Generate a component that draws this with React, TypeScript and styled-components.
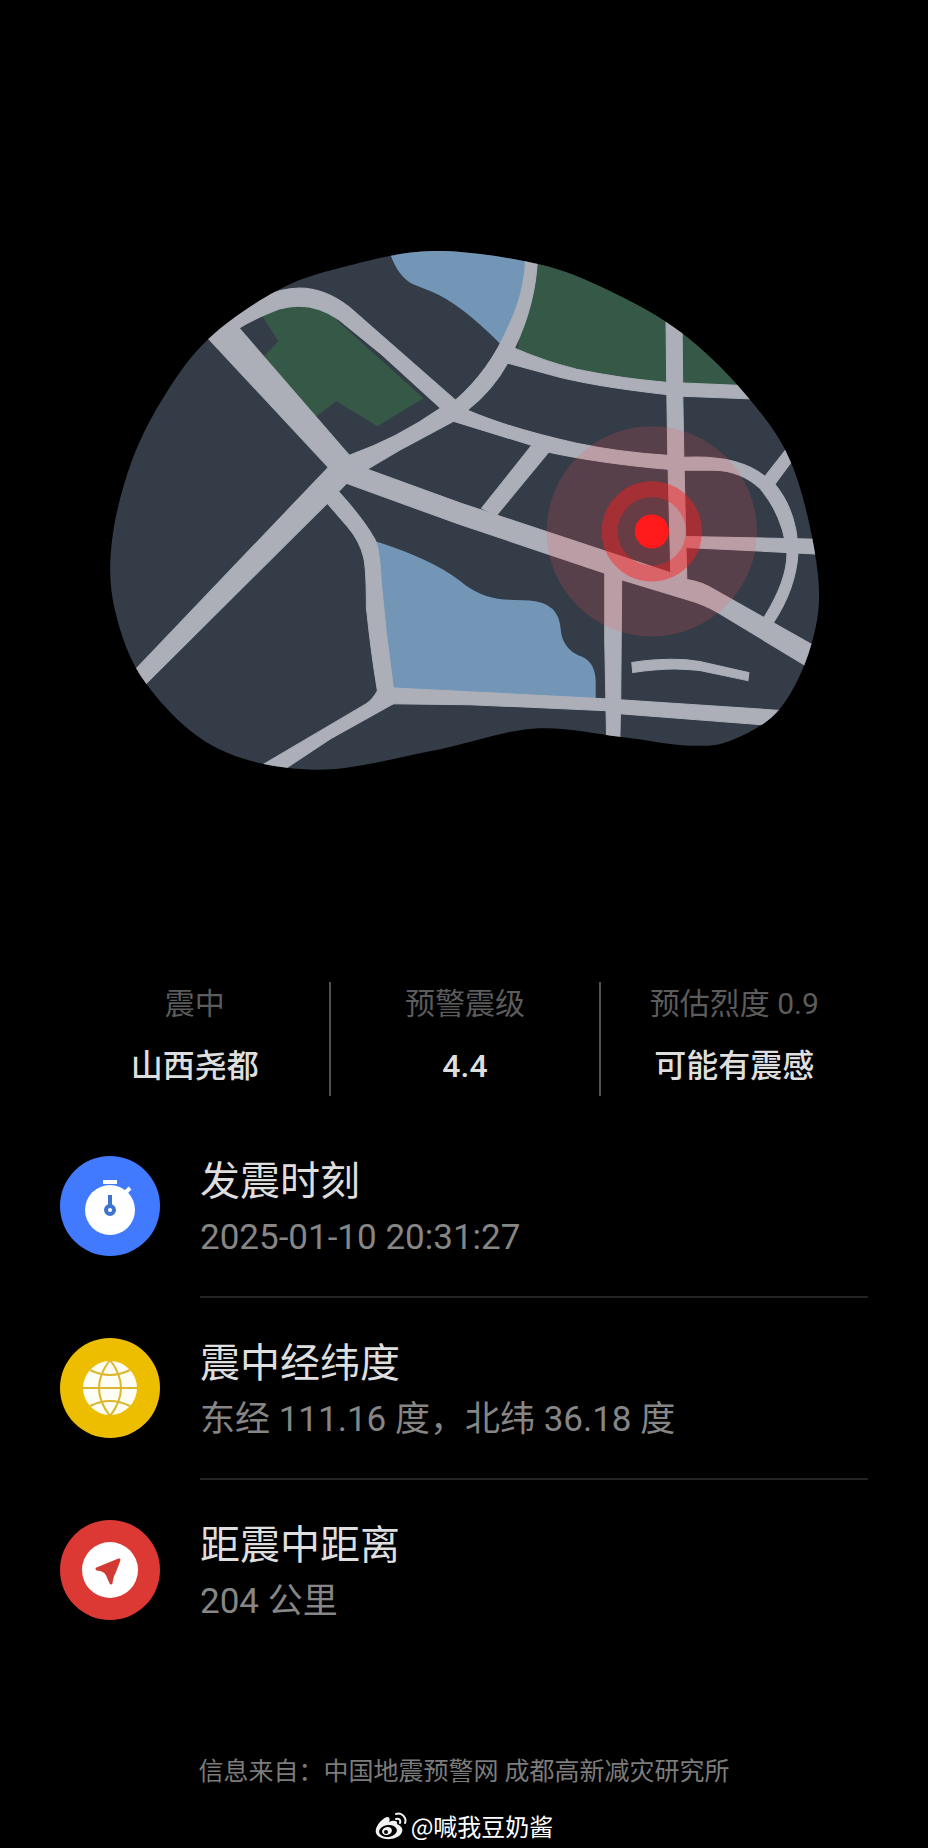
import React from 'react';
import styled, { createGlobalStyle } from 'styled-components';

const Global = createGlobalStyle`
  * { box-sizing: border-box; }
  body {
    margin: 0;
    background: #000;
    font-family: Roboto, "Noto Sans CJK SC", sans-serif;
  }
  h2, p, dl, dt, dd, ul { margin: 0; padding: 0; font-weight: 400; }
`;

const Page = styled.main`
  display: flex;
  flex-direction: column;
  padding: 250px 60px 0;
`;

const MapArt = styled.svg`
  display: block;
  width: 88%;
  margin: 0 auto;
`;

const Summary = styled.dl`
  display: grid;
  grid-template-columns: repeat(3, 1fr);
  margin-top: 211px;
`;

const Stat = styled.div`
  display: flex;
  flex-direction: column;
  align-items: center;
  gap: 16px;
  height: 114px;
  white-space: nowrap;
  & + & { border-left: 2px solid #505050; }
`;

const StatLabel = styled.dt`
  font-size: 30px;
  line-height: 44px;
  color: #5c5c5c;
`;

const StatValue = styled.dd`
  font-size: 32px;
  line-height: 48px;
  font-weight: 500;
  color: #dedede;
`;

const Details = styled.ul`
  display: flex;
  flex-direction: column;
  gap: 40px;
  margin-top: 60px;
  list-style: none;
`;

const Detail = styled.li`
  display: flex;
  gap: 40px;
`;

const Badge = styled.svg`
  flex: none;
  width: 100px;
  height: 100px;
`;

const DetailBody = styled.div<{ $last?: boolean }>`
  flex: 1;
  height: 142px;
  border-bottom: ${(p) => (p.$last ? 'none' : '2px solid #242424')};
`;

const DetailTitle = styled.h2`
  font-size: 40px;
  line-height: 52px;
  color: #dedede;
`;

const DetailText = styled.p`
  font-size: 35px;
  line-height: 60px;
  color: #868686;
`;

const Source = styled.p`
  margin-top: 92px;
  font-size: 25px;
  line-height: 36px;
  text-align: center;
  color: #7c7c7c;
`;

const Credit = styled.p`
  display: flex;
  align-items: center;
  justify-content: center;
  gap: 4px;
  margin-top: 18px;
  font-family: "Noto Sans CJK SC", sans-serif;
  font-size: 24px;
  line-height: 36px;
  color: #fff;
`;

type Pt = [number, number];

const blob: Pt[] = [
  [210, 338], [277, 291], [340, 268], [433, 251], [538, 264], [610, 291], [682, 333], [748, 397],
  [793, 467], [818, 575], [811, 645], [780, 708], [733, 739], [690, 745], [620, 736], [533, 728],
  [433, 750], [317, 769], [217, 747], [147, 683], [116, 610], [113, 540], [133, 460], [167, 393],
];

/* Closed smooth curve through every point. */
function smoothLoop(pts: Pt[]) {
  const n = pts.length;
  const at = (i: number) => pts[(i + n) % n];
  let d = `M${pts[0][0]} ${pts[0][1]}`;
  for (let i = 0; i < n; i++) {
    const [a, b, c, e] = [at(i - 1), at(i), at(i + 1), at(i + 2)];
    d += `C${b[0] + (c[0] - a[0]) / 6} ${b[1] + (c[1] - a[1]) / 6} ${c[0] - (e[0] - b[0]) / 6} ${c[1] - (e[1] - b[1]) / 6} ${c[0]} ${c[1]}`;
  }
  return d + 'Z';
}

const roads = [
  // north-west avenue and its loop
  'M180 307L329 467L338 476L350 455L240 328Q254 319 280 309Q312 300 340 320L383 355L441 408L456 400L350 307Q308 274 262 298L240 290L190 300Z',
  // diagonal to the south-west
  'M329 467L118 688L130 700L328 503L347 483L368 469L350 455Z',
  // junction to the central crossing
  'M350 455Q398 438 441 408L456 400L468 410L454 421L400 450L368 469L345 476Z',
  // main avenue, south-east
  'M345 460L368 469L462 503L670 572L687 579Q702 581 716 590L764 617L830 654L830 680L718 612Q704 604 690 600L621 579L606 573L460 524L347 483L329 467Z',
  // street to the lake
  'M328 503L348 526Q360 540 364 556Q367 567 367 607Q372 655 378 690Q374 698 367 703L255 769L280 772L333 737L394 703L394 688L387 633L382 583Q380 545 375 538Q366 522 347 500L339 491L347 483L330 480L320 495Z',
  // southern street
  'M390 687L470 691L605 698L620 699L800 711L800 726L762 724L620 713L607 710L470 704L390 703Z',
  'M605 570L622 577L621 699L620 745L607 745L605 640Z',
  // northern curve
  'M526 250Q527 290 508 328Q490 370 456 400L454 412L468 410Q494 389 508 363L515 348Q538 300 538 250Z',
  'M515 348Q545 361 577 369Q620 378 666 382L760 386L760 399L683 396Q605 388 560 377L508 363L508 350Z',
  'M666 300L682 300L683 397L684 457L687 579L671 574L668 457L667 393Z',
  // ring road
  'M468 410Q510 428 577 443Q620 452 667 455L684 457Q738 454 765 476L775 484Q798 512 798 553Q796 588 773 623L764 617Q787 580 787 553Q783 515 760 488Q740 470 713 470L683 470L668 469Q600 463 549 452L532 445L454 421Z',
  'M765 476L790 444L797 454L775 484Z',
  'M686 536L825 539L825 554L686 547Z',
  'M532 445L549 452L497 515L482 508Z',
  'M632 662Q672 656 700 661L749 672L748 680L700 670Q670 666 633 672Z',
];

function EpicenterMap() {
  return (
    <MapArt viewBox="109 250 710 520" role="img" aria-label="震中地图">
      <clipPath id="blob"><path d={smoothLoop(blob)} /></clipPath>
      <g clipPath="url(#blob)">
        <rect x="109" y="250" width="712" height="522" fill="#333c47" />
        <path fill="#365846" d="M263 316L279 341L265 356L316 417L337 401L378 426L424 398L334 317Q305 295 263 316Z" />
        <path fill="#365846" d="M532 250L518 350Q580 376 666 386L760 388L700 300Z" />
        <path fill="#7396b7" d="M388 245Q396 275 413 284L433 292Q460 303 501 344L530 280L530 240Z" />
        <path fill="#7396b7" d="M377 541Q433 559 460 580Q480 597 504 599L530 600Q559 602 561 628C562 645 573 653 582 656Q596 662 596 682L596 699L390 692Z" />
        <g fill="#acafb8" stroke="#acafb8" strokeWidth="1">{roads.map((d) => <path key={d} d={d} />)}</g>
        <circle cx="652" cy="531" r="105" fill="#ff5252" fillOpacity="0.18" />
        <circle cx="652" cy="531" r="34" fill="#ff1e1e" fillOpacity="0.1" />
        <circle cx="652" cy="531" r="42" fill="none" stroke="#ff1e1e" strokeWidth="16" strokeOpacity="0.46" />
        <circle cx="652" cy="531" r="17" fill="#ff1a1c" />
      </g>
    </MapArt>
  );
}

function ClockBadge() {
  return (
    <Badge viewBox="0 0 100 100" aria-hidden="true">
      <circle cx="50" cy="50" r="50" fill="#417aff" />
      <circle cx="50" cy="54" r="25" fill="#fff" />
      <rect x="43" y="24" width="14" height="4" fill="#fff" />
      <path d="M64 38L70 32" stroke="#fff" strokeWidth="4" />
      <path d="M50 39V50" stroke="#3f73d0" strokeWidth="4" />
      <circle cx="50" cy="54" r="4" fill="none" stroke="#3f73d0" strokeWidth="4" />
    </Badge>
  );
}

function GlobeBadge() {
  return (
    <Badge viewBox="0 0 100 100" aria-hidden="true">
      <circle cx="50" cy="50" r="50" fill="#edbe00" />
      <circle cx="50" cy="50" r="27" fill="#fffef4" />
      <g fill="none" stroke="#dcb62c" strokeWidth="2">
        <path d="M22 50H78M50 22Q28 50 50 78M50 22Q72 50 50 78M30 32Q50 42 70 32M30 68Q50 58 70 68" />
      </g>
    </Badge>
  );
}

function ArrowBadge() {
  return (
    <Badge viewBox="0 0 100 100" aria-hidden="true">
      <circle cx="50" cy="50" r="50" fill="#dc3934" />
      <circle cx="50" cy="50" r="28" fill="#fff" />
      <path d="M59 40L37 49Q45 50 47 54L51 63Q52 56 54 53Z" fill="#d23a34" stroke="#d23a34" strokeWidth="3" strokeLinejoin="round" />
    </Badge>
  );
}

function WeiboLogo() {
  return (
    <svg width="32" height="28" viewBox="0 0 32 28" aria-hidden="true">
      <path fill="#f2f2f2" d="M13 5C15 6 15 8 14 10C18 8 23 8 22 12C27 14 29 18 26 22C21 29 4 29 1 21C-1 15 8 5 13 5Z" />
      <ellipse cx="13" cy="19" rx="9" ry="6" fill="#000" transform="rotate(-8 13 19)" />
      <ellipse cx="12" cy="19" rx="5" ry="4" fill="#f2f2f2" transform="rotate(-15 12 19)" />
      <circle cx="11" cy="20" r="2" fill="#000" />
      <path d="M21 2C27 0 32 6 30 11M21 7C24 6 26 8 25 11" fill="none" stroke="#f2f2f2" strokeWidth="2" strokeLinecap="round" />
    </svg>
  );
}

const stats = [
  { label: '震中', value: '山西尧都' },
  { label: '预警震级', value: '4.4' },
  { label: '预估烈度 0.9', value: '可能有震感' },
];

const details = [
  { icon: <ClockBadge />, title: '发震时刻', text: '2025-01-10 20:31:27' },
  { icon: <GlobeBadge />, title: '震中经纬度', text: '东经 111.16 度，北纬 36.18 度' },
  { icon: <ArrowBadge />, title: '距震中距离', text: '204 公里' },
];

export default function App() {
  return (
    <>
      <Global />
      <Page>
        <EpicenterMap />
        <Summary>
          {stats.map((s) => (
            <Stat key={s.label}>
              <StatLabel>{s.label}</StatLabel>
              <StatValue>{s.value}</StatValue>
            </Stat>
          ))}
        </Summary>
        <Details>
          {details.map((d, i) => (
            <Detail key={d.title}>
              {d.icon}
              <DetailBody $last={i === details.length - 1}>
                <DetailTitle>{d.title}</DetailTitle>
                <DetailText>{d.text}</DetailText>
              </DetailBody>
            </Detail>
          ))}
        </Details>
        <Source>信息来自：中国地震预警网 成都高新减灾研究所</Source>
        <Credit><WeiboLogo />@喊我豆奶酱</Credit>
      </Page>
    </>
  );
}
